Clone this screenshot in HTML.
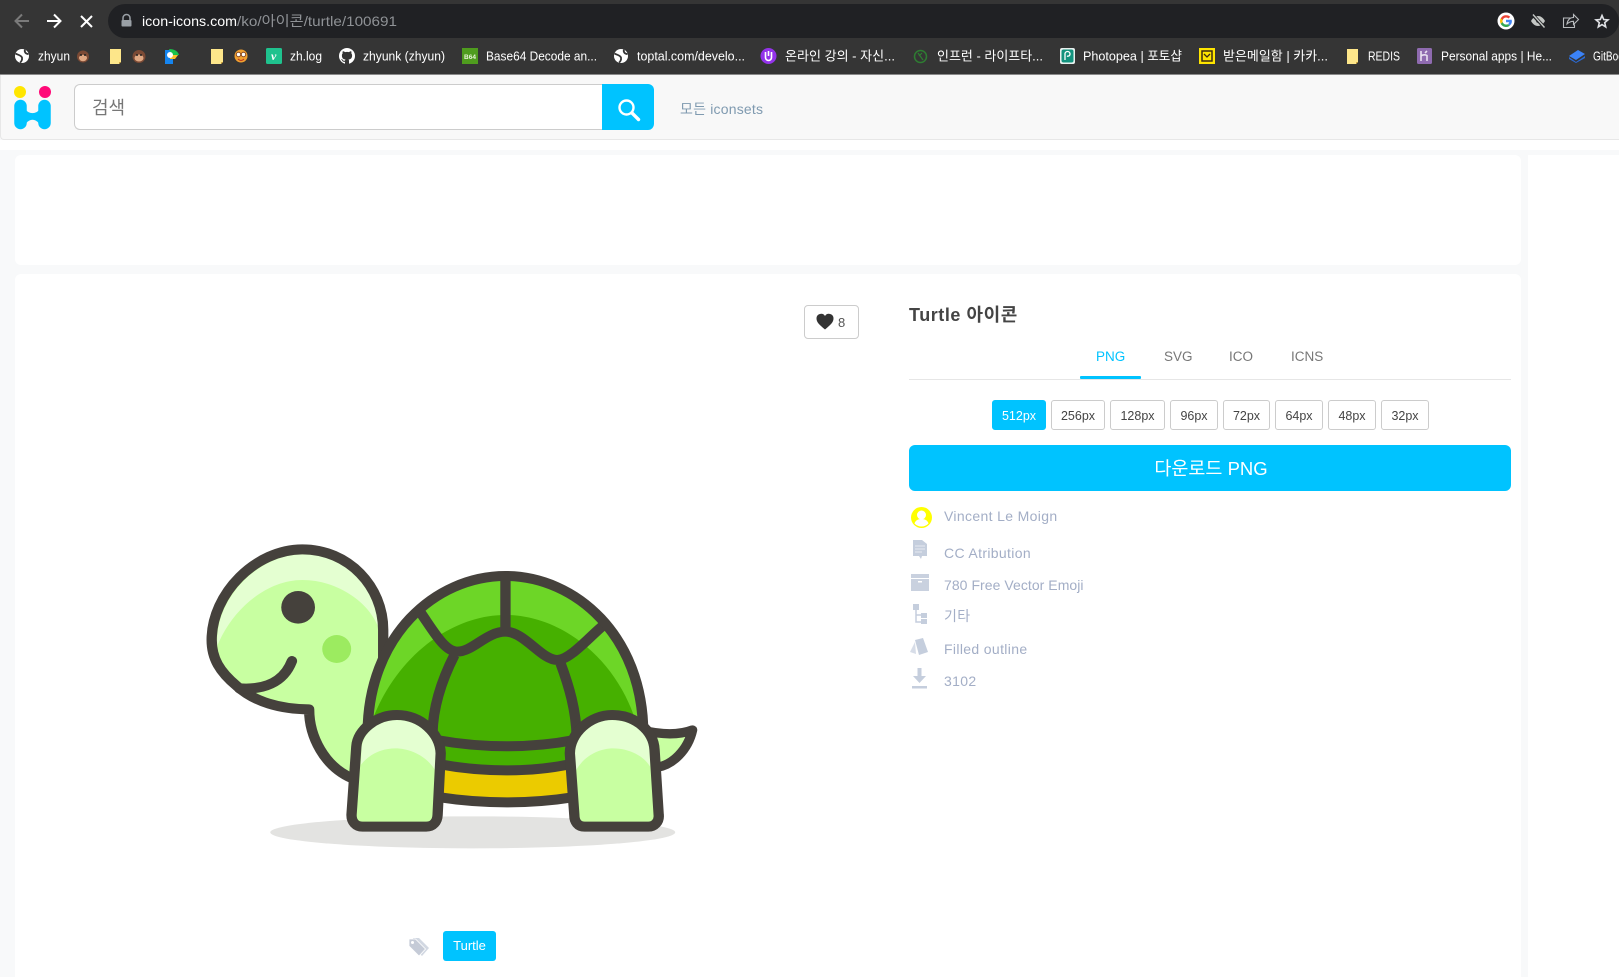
<!DOCTYPE html>
<html lang="ko"><head><meta charset="utf-8"><title>Turtle 아이콘</title>
<style>
*{box-sizing:border-box}
html,body{margin:0;padding:0;width:1619px;height:977px;overflow:hidden;background:#f8f9fa;font-family:"Liberation Sans","Noto Sans CJK KR",sans-serif}
.a{position:absolute}
.t{position:absolute;white-space:nowrap;line-height:20px;height:20px}
#chrome{position:absolute;left:0;top:0;width:1619px;height:75px;background:#353535}
#hdr{position:absolute;left:0;top:75px;width:1619px;height:65px;background:#f8f8f8;border:1px solid #e7e7e7;border-top:0;border-right:0;border-radius:0 0 0 4px}
#strip{position:absolute;left:0;top:140px;width:1619px;height:10px;background:#fff}
.card{position:absolute;background:#fff;border-radius:6px}
.sz{position:absolute;top:400px;height:30px;border:1px solid #ccc;border-radius:3px;background:#fff;color:#444;font-size:12.5px;line-height:30px;text-align:center}
.sz.on{background:#00c3ff;border-color:#00c3ff;color:#fff}
.tab{position:absolute;top:347px;line-height:20px;font-size:13.5px;color:#777;white-space:nowrap}
.inf{position:absolute;left:944px;font-size:14px;line-height:20px;color:#a3aec6;white-space:nowrap;letter-spacing:.35px}
svg{display:block}
</style></head><body>
<div id="chrome">
<svg width="1619" height="75" viewBox="0 0 1619 75" font-family="'Liberation Sans','Noto Sans CJK KR',sans-serif">
<rect x="108" y="4" width="1511" height="34" rx="17" fill="#202124"/>
<rect y="74" width="1619" height="1" fill="#8a8a8a"/>
<path d="M29 21H16M22 14.500l-6.500 6.500 6.500 6.500" fill="none" stroke="#7a7a7a" stroke-width="2"/>
<path d="M47 21H60M54 14.500l6.500 6.500-6.500 6.500" fill="none" stroke="#fff" stroke-width="2"/>
<path d="M81 16l11 11M92 16l-11 11" fill="none" stroke="#fff" stroke-width="2"/>
<path d="M123 20v-2a3.500 3.500 0 0 1 7 0v2" fill="none" stroke="#9aa0a6" stroke-width="1.500"/><rect x="121.500" y="20" width="10" height="6.500" rx="1" fill="#9aa0a6"/>
<text x="142" y="26" font-size="14" fill="#fff" textLength="95" lengthAdjust="spacingAndGlyphs">icon-icons.com</text>
<text x="237" y="26" font-size="14" fill="#8f9296" textLength="160" lengthAdjust="spacingAndGlyphs">/ko/아이콘/turtle/100691</text>
<circle cx="1506" cy="21" r="8.500" fill="#fff"/>
<path d="M1506 17.500a3.500 3.500 0 0 1 2.500 1l1.700-1.700a6 6 0 0 0-9.500 1.800l2 1.600a3.600 3.600 0 0 1 3.300-2.700z" fill="#ea4335"/>
<path d="M1502.500 21a3.500 3.500 0 0 1 .2-1.100l-2-1.600a6 6 0 0 0 0 5.400l2-1.600a3.500 3.500 0 0 1-.2-1.100z" fill="#fbbc05"/>
<path d="M1506 24.500a3.600 3.600 0 0 1-3.300-2.400l-2 1.600a6 6 0 0 0 9.200 1.900l-1.900-1.500a3.500 3.500 0 0 1-2 .4z" fill="#34a853"/>
<path d="M1506 19.800v2.400h3.300a3 3 0 0 1-1.300 1.800l1.900 1.500a5.800 5.800 0 0 0 1.800-5.700z" fill="#4285f4"/>
<path d="M1531 21c2-3.500 4.500-5 7-5s5 1.500 7 5c-2 3.500-4.500 5-7 5s-5-1.500-7-5z" fill="#c4c7c5"/><circle cx="1538" cy="21" r="1.800" fill="#202124"/><path d="M1532.500 14.500l12 13" stroke="#202124" stroke-width="3.400"/><path d="M1533 14.500l11.500 13" stroke="#c4c7c5" stroke-width="1.400"/>
<path d="M1571 18h-7.500v9.500h11v-3" fill="none" stroke="#b8bbbe" stroke-width="1.100"/><path d="M1567 24c.5-4 3-6.500 6.500-6.500V14.500l5 5-5 5v-3.200c-3 0-4.500.8-6.500 2.700z" fill="none" stroke="#b8bbbe" stroke-width="1.100"/>
<path d="M1602 15.500l1.700 4 4.300.4-3.300 2.800 1 4.200-3.700-2.300-3.700 2.300 1-4.200-3.300-2.800 4.300-.4z" fill="none" stroke="#dfe1e5" stroke-width="1.600"/>

<circle cx="22" cy="56" r="7" fill="#fff"/><path d="M15.500 53.500C18 55 21 55 22 57.500C22.500 60 21 62 20 62.500M25 49.800C24 52 26 54 28.500 54" fill="none" stroke="#353535" stroke-width="1.800"/>
<text x="38" y="60.500" font-size="13" fill="#fff" textLength="32" lengthAdjust="spacingAndGlyphs">zhyun</text>
<circle cx="83" cy="56.500" r="6" fill="#7b4a35"/><ellipse cx="83" cy="58" rx="4" ry="3.200" fill="#e0a883"/><circle cx="81" cy="55" r="1" fill="#222"/><circle cx="85" cy="55" r="1" fill="#222"/>
<path d="M110 49h11v13l-2 2h-9z" fill="#fde68a"/><path d="M119 64l2-2h-2z" fill="#d9a93a"/>
<circle cx="139" cy="56.500" r="6.500" fill="#7b4a35"/><ellipse cx="139" cy="58" rx="4.500" ry="3.500" fill="#e0a883"/><circle cx="137" cy="55" r="1" fill="#222"/><circle cx="141" cy="55" r="1" fill="#222"/>
<path d="M165 50h8v14h-8z" fill="#1585f0"/><path d="M169 49c5 0 9 2 10 6h-7z" fill="#19c24c"/><path d="M170 55h8l-3 4h-5z" fill="#f8c02a"/><circle cx="170" cy="55" r="3" fill="#fff"/>
<path d="M211 49h12v13l-2 2h-10z" fill="#fde68a"/><path d="M221 64l2-2h-2z" fill="#d9a93a"/>
<circle cx="241" cy="56" r="6.500" fill="#f0a030"/><circle cx="238.500" cy="54.500" r="2.200" fill="#fff" stroke="#8a4a20"/><circle cx="243.500" cy="54.500" r="2.200" fill="#fff" stroke="#8a4a20"/><path d="M238 59c2 2 4 2 6 0" stroke="#b8331f" fill="none"/>
<rect x="266" y="48" width="16" height="16" rx="1.500" fill="#1fc28e"/><text x="271" y="60" font-size="12" font-style="italic" font-weight="700" font-family="'Liberation Serif',serif" fill="#fff">v</text>
<text x="290" y="60.500" font-size="13" fill="#fff" textLength="32" lengthAdjust="spacingAndGlyphs">zh.log</text>
<path d="M347 48a8 8 0 0 0-2.500 15.600c.4.100.5-.2.500-.4v-1.400c-2.200.5-2.700-1-2.700-1-.4-.9-.9-1.200-.9-1.200-.7-.5.100-.5.100-.5.800.100 1.200.8 1.200.8.700 1.200 1.900.9 2.300.7.100-.5.300-.9.500-1.100-1.800-.2-3.600-.9-3.600-4 0-.9.300-1.600.8-2.100-.1-.2-.4-1 .1-2.100 0 0 .7-.2 2.200.8a7.500 7.500 0 0 1 4 0c1.500-1 2.200-.8 2.200-.8.400 1.100.2 1.900.1 2.100.5.500.8 1.300.8 2.100 0 3.100-1.900 3.800-3.600 4 .3.300.5.800.5 1.500v2.200c0 .2.100.5.500.4A8 8 0 0 0 347 48z" fill="#fff"/>
<text x="363" y="60.500" font-size="13" fill="#fff" textLength="82" lengthAdjust="spacingAndGlyphs">zhyunk (zhyun)</text>
<rect x="462" y="48" width="16" height="16" fill="#4f9c1e"/><text x="470" y="59" font-size="6.500" font-weight="700" text-anchor="middle" fill="#e8f5d8">B64</text>
<text x="486" y="60.500" font-size="13" fill="#fff" textLength="111" lengthAdjust="spacingAndGlyphs">Base64 Decode an...</text>
<circle cx="621" cy="56" r="7" fill="#fff"/><path d="M614.500 53.500C617 55 620 55 621 57.500C621.500 60 620 62 619 62.500M624 49.800C623 52 625 54 627.500 54" fill="none" stroke="#353535" stroke-width="1.800"/>
<text x="637" y="60.500" font-size="13" fill="#fff" textLength="108" lengthAdjust="spacingAndGlyphs">toptal.com/develo...</text>
<circle cx="768.500" cy="56" r="8" fill="#9333ea"/><path d="M765.500 52v5.500a3 3 0 0 0 6 0V52" fill="none" stroke="#fff" stroke-width="1.600"/><rect x="767.700" y="51" width="1.600" height="5" fill="#fff"/>
<text x="785" y="60.500" font-size="13" fill="#fff" textLength="110" lengthAdjust="spacingAndGlyphs">온라인 강의 - 자신...</text>
<circle cx="920.500" cy="56.500" r="6" fill="none" stroke="#2e7d32" stroke-width="1.500"/><path d="M918 53l5 7M922 53l-3 3" stroke="#2e7d32" stroke-width="1.200" fill="none"/>
<text x="937" y="60.500" font-size="13" fill="#fff" textLength="106" lengthAdjust="spacingAndGlyphs">인프런 - 라이프타...</text>
<rect x="1060" y="48" width="15" height="16" rx="2" fill="#e8f0ee"/><rect x="1061.500" y="49.500" width="12" height="13" rx="2" fill="#12937e"/><path d="M1065 60v-6a2.500 2.500 0 0 1 5 0c0 2-2 2.500-3 2" fill="none" stroke="#fff" stroke-width="1.300"/>
<text x="1083" y="60.500" font-size="13" fill="#fff" textLength="99" lengthAdjust="spacingAndGlyphs">Photopea | 포토샵</text>
<rect x="1199" y="48" width="16" height="16" fill="#fee500"/><rect x="1202" y="51" width="10" height="10" fill="none" stroke="#3b2a12" stroke-width="1.500"/><path d="M1204 54l3 3 3-3" fill="none" stroke="#3b2a12" stroke-width="1.300"/>
<text x="1223" y="60.500" font-size="13" fill="#fff" textLength="105" lengthAdjust="spacingAndGlyphs">받은메일함 | 카카...</text>
<path d="M1347 49h11v13l-2 2h-9z" fill="#fde68a"/><path d="M1356 64l2-2h-2z" fill="#d9a93a"/>
<text x="1368" y="60.500" font-size="13" fill="#fff" textLength="32" lengthAdjust="spacingAndGlyphs">REDIS</text>
<rect x="1417" y="48" width="15" height="16" rx="1.500" fill="#8f6bb0"/><path d="M1421 51v10M1421 56c2-1.500 4.500-1.500 6-.5V61M1427 51l-2 2" fill="none" stroke="#e8e0f0" stroke-width="1.600"/>
<text x="1441" y="60.500" font-size="13" fill="#fff" textLength="111" lengthAdjust="spacingAndGlyphs">Personal apps | He...</text>
<path d="M1569 56l9-6 7 4-9 6z" fill="#3b82f6"/><path d="M1569 57l7 5 9-6v2l-9 5-7-4z" fill="#2a6bd8"/>
<text x="1593" y="60.500" font-size="13" fill="#fff" textLength="36" lengthAdjust="spacingAndGlyphs">GitBook</text>
</svg>
</div>

<div id="hdr"></div>
<svg class="a" style="left:0;top:76px" width="60" height="60" viewBox="0 76 60 60">
<circle cx="20" cy="92" r="6" fill="#ffe600"/><circle cx="45" cy="92" r="6" fill="#ff0a78"/>
<path d="M20.500 106V123M44.500 106V123" fill="none" stroke="#00c3ff" stroke-width="12.500" stroke-linecap="round"/>
<path d="M25 109C29 114.500 36 114.500 40 109V125C36 118 29 118 25 125Z" fill="#00c3ff"/>
</svg>
<div class="a" style="left:74px;top:84px;width:530px;height:46px;background:#fff;border:1px solid #ccc;border-right:0;border-radius:6px 0 0 6px"></div>
<div class="t" style="left:92px;top:96px;height:24px;line-height:24px;font-size:18px;color:#777">검색</div>
<div class="a" style="left:602px;top:84px;width:52px;height:46px;background:#00c3ff;border-radius:0 6px 6px 0"></div>
<svg class="a" style="left:617px;top:98px" width="24" height="24" viewBox="0 0 24 24"><circle cx="9.500" cy="9.500" r="7" fill="none" stroke="#fff" stroke-width="2.400"/><path d="M15 15l6.500 6.500" stroke="#fff" stroke-width="3.400" stroke-linecap="round"/></svg>
<div class="t" style="left:680px;top:99px;font-size:14px;color:#7f9ab0;letter-spacing:.2px">모든 iconsets</div>

<div id="strip"></div>
<div class="card" style="left:15px;top:155px;width:1506px;height:110px"></div>
<div class="card" style="left:15px;top:274px;width:1506px;height:703px;border-radius:6px 6px 0 0"></div>
<div class="a" style="left:1528px;top:155px;width:91px;height:822px;background:#fff"></div>

<svg class="a" style="left:180px;top:520px" width="540" height="340" viewBox="0 0 1568 1020" preserveAspectRatio="none">
<ellipse cx="850" cy="937" rx="588" ry="48" fill="#e3e3e1"/>
<path d="M1340 630C1400 645 1450 645 1488 630C1475 690 1430 735 1385 742Z" fill="#c8ffa1" stroke="#45413c" stroke-width="28" stroke-linejoin="round"/>
<path d="M165 498C115 455 92 415 92 360C92 220 220 88 355 88C490 88 590 200 590 330V440L620 800L500 775C420 740 375 650 375 568C290 568 215 545 165 498Z" fill="#c8ffa1"/>
<path d="M108 378C150 270 250 180 355 180C460 180 550 250 575 320V330C575 200 480 103 355 103C230 103 108 230 108 360Z" fill="#e4ffd1"/>
<path d="M500 775C420 740 375 650 375 568C290 568 215 545 165 498C115 455 92 415 92 360C92 220 220 88 355 88C490 88 590 200 590 330V440" fill="none" stroke="#45413c" stroke-width="30" stroke-linejoin="round" stroke-linecap="round"/>
<circle cx="343" cy="262" r="49" fill="#45413c"/><circle cx="455" cy="387" r="42" fill="#9ceb60"/>
<path d="M325 423C300 490 240 510 172 505" fill="none" stroke="#45413c" stroke-width="30" stroke-linecap="round"/>
<path d="M545 640C545 350 740 168 945 168C1150 168 1345 350 1345 640L1300 800C1100 860 800 860 640 800Z" fill="#6dd627"/>
<path d="M555 610C620 420 780 285 945 285C1110 285 1270 420 1325 610L1290 760C1100 770 800 770 620 760Z" fill="#46b000"/>
<path d="M745 745C880 765 1020 765 1145 745V825C1020 845 880 845 745 825Z" fill="#ebcb00"/>
<path d="M545 640C545 350 740 168 945 168C1150 168 1345 350 1345 640" fill="none" stroke="#45413c" stroke-width="30"/>
<path d="M945 168V335M700 280C740 340 770 395 805 395C850 395 890 335 945 335C1000 335 1050 420 1095 420C1130 420 1180 360 1225 320M797 405C760 480 735 560 733 640M1105 430C1130 500 1150 570 1152 650M745 660C880 685 1020 685 1145 660M755 733C880 757 1020 757 1130 733M755 832C880 852 1020 852 1140 832" fill="none" stroke="#45413c" stroke-width="30"/>
<path d="M498 885L512 680C515 630 570 585 630 585C700 585 755 640 757 700L748 885C747 905 735 920 715 920H530C510 920 498 905 498 885Z" fill="#c8ffa1"/>
<path d="M525 735C550 700 590 685 625 685C670 685 720 710 743 755V700C740 650 695 600 630 600C575 600 530 640 527 685Z" fill="#e4ffd1"/>
<path d="M498 885L512 680C515 630 570 585 630 585C700 585 755 640 757 700L748 885C747 905 735 920 715 920H530C510 920 498 905 498 885Z" fill="none" stroke="#45413c" stroke-width="30"/>
<path d="M1145 885L1132 700C1132 640 1190 585 1255 585C1320 585 1375 630 1378 690L1390 885C1392 905 1378 920 1360 920H1175C1155 920 1145 905 1145 885Z" fill="#c8ffa1"/>
<path d="M1148 755C1170 710 1215 685 1258 685C1300 685 1345 705 1365 740V690C1360 640 1315 600 1255 600C1195 600 1148 645 1147 700Z" fill="#e4ffd1"/>
<path d="M1145 885L1132 700C1132 640 1190 585 1255 585C1320 585 1375 630 1378 690L1390 885C1392 905 1378 920 1360 920H1175C1155 920 1145 905 1145 885Z" fill="none" stroke="#45413c" stroke-width="30"/>
</svg>

<div class="a" style="left:804px;top:305px;width:55px;height:34px;border:1px solid #ccc;border-radius:4px;background:#fff"></div>
<svg class="a" style="left:816px;top:313px" width="18" height="17" viewBox="0 0 18 17"><path d="M9 16.500C3 11.500 .5 9 .5 5.500A4.600 4.600 0 0 1 9 3a4.600 4.600 0 0 1 8.500 2.500C17.500 9 15 11.500 9 16.500z" fill="#333"/></svg>
<div class="t" style="left:838px;top:313px;font-size:13px;color:#555">8</div>

<div class="t" style="left:909px;top:303px;height:24px;line-height:24px;font-size:18px;font-weight:700;color:#444;letter-spacing:.55px">Turtle 아이콘</div>
<div class="tab" style="left:1096px;color:#00c3ff">PNG</div>
<div class="tab" style="left:1164px">SVG</div>
<div class="tab" style="left:1229px">ICO</div>
<div class="tab" style="left:1291px">ICNS</div>
<div class="a" style="left:909px;top:379px;width:602px;height:1px;background:#e6e6e6"></div>
<div class="a" style="left:1080px;top:376px;width:61px;height:3px;background:#00c3ff;border-radius:1px"></div>

<div class="sz on" style="left:992px;width:54px">512px</div>
<div class="sz" style="left:1051px;width:54px">256px</div>
<div class="sz" style="left:1110px;width:55px">128px</div>
<div class="sz" style="left:1170px;width:48px">96px</div>
<div class="sz" style="left:1223px;width:47px">72px</div>
<div class="sz" style="left:1275px;width:48px">64px</div>
<div class="sz" style="left:1328px;width:48px">48px</div>
<div class="sz" style="left:1381px;width:48px">32px</div>

<div class="a" style="left:909px;top:445px;width:602px;height:46px;background:#00c3ff;border-radius:6px;color:#fff;font-size:18.5px;line-height:48px;text-align:center;padding-left:2px">다운로드 PNG</div>

<svg class="a" style="left:911px;top:507px" width="21" height="21" viewBox="0 0 21 21"><circle cx="10.500" cy="10.500" r="10.500" fill="#ffff00"/><circle cx="10.500" cy="8" r="4.500" fill="#fff"/><path d="M3.500 16.500c1-3.500 4-4.500 7-4.500s6 1 7 4.500c-2 2-4.500 3-7 3s-5-1-7-3z" fill="#fff"/></svg>
<div class="inf" style="top:506px">Vincent Le Moign</div>
<svg class="a" style="left:913px;top:540px" width="14" height="20" viewBox="0 0 14 20"><path d="M0 0h9l5 4v12H9l-1 3-2-3H0z" fill="#c5cedd"/><path d="M2 6h10M2 9h10M2 12h7" stroke="#e6eaf1"/></svg>
<div class="inf" style="top:543px">CC Atribution</div>
<svg class="a" style="left:911px;top:574px" width="18" height="17" viewBox="0 0 18 17"><rect width="18" height="4" fill="#c9d1df"/><rect y="5" width="18" height="12" fill="#c9d1df"/><rect x="7" y="7" width="4" height="1.500" fill="#fff"/></svg>
<div class="inf" style="top:575px;letter-spacing:.05px">780 Free Vector Emoji</div>
<svg class="a" style="left:912px;top:604px" width="16" height="21" viewBox="0 0 16 21"><path d="M1 0h6v6H1zM9 9h6v5H9zM9 15h6v5H9z" fill="#c5cedd"/><path d="M4 5v13h6M4 11h6" stroke="#c5cedd" stroke-width="1.500" fill="none"/></svg>
<div class="inf" style="top:606px">기타</div>
<svg class="a" style="left:910px;top:638px" width="19" height="17" viewBox="0 0 19 17"><path d="M5 2l8-2 5 14-9 3z" fill="#c5cedd"/><path d="M5 4L0 14l6 2z" fill="#d7dde8"/></svg>
<div class="inf" style="top:639px">Filled outline</div>
<svg class="a" style="left:912px;top:668px" width="15" height="21" viewBox="0 0 15 21"><path d="M5.500 0h4v8H14l-6.500 7L1 8h4.500z" fill="#c5cedd"/><rect y="18" width="15" height="2.500" fill="#c5cedd"/></svg>
<div class="inf" style="top:671px">3102</div>

<svg class="a" style="left:408px;top:938px" width="22" height="19" viewBox="0 0 22 19"><path d="M5 0h6l10 10-7 8L4 8z" fill="#d2d8e2"/><path d="M1 1h6.500l10 10-6.500 7L1 8z" fill="#c5cbd7" stroke="#fff" stroke-width=".8"/><circle cx="4.500" cy="4.500" r="1.500" fill="#fff"/></svg>
<div class="a" style="left:443px;top:931px;width:53px;height:30px;background:#00c3ff;border-radius:3px;color:#fff;font-size:13px;line-height:30px;text-align:center">Turtle</div>
</body></html>
